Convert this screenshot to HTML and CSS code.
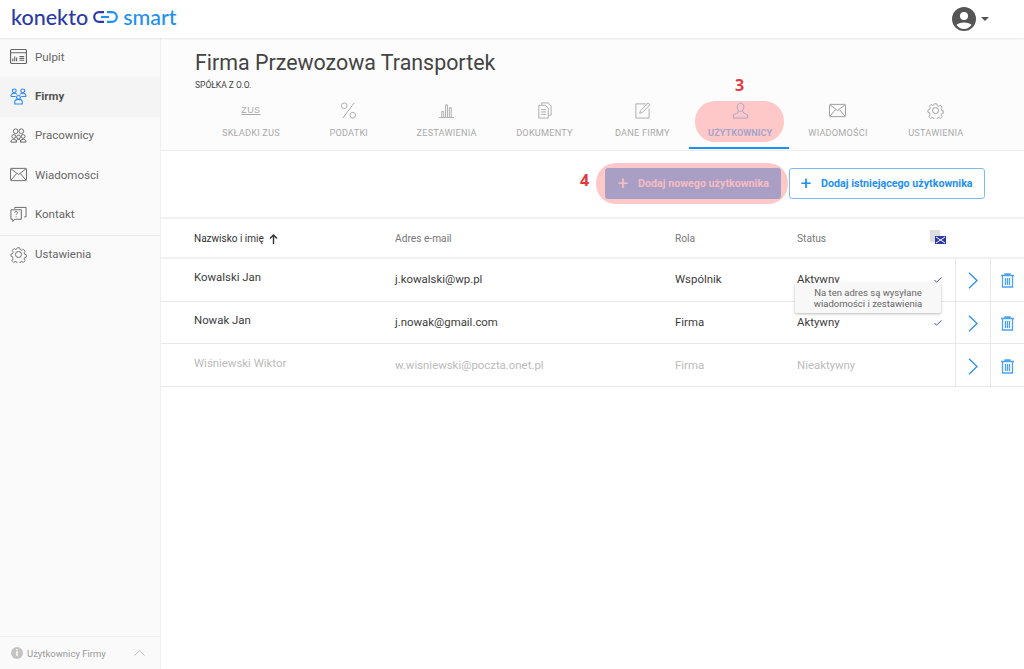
FILE: index.html
```html
<!DOCTYPE html>
<html lang="pl">
<head>
<meta charset="utf-8">
<title>Konekto Smart</title>
<link rel="stylesheet" href="styles.css">
</head>
<body>
<header class="topbar">
  <div class="logo"><span class="logo-dark">konekto</span>
    <svg class="logo-mark" width="25" height="12" viewBox="0 0 25 12" fill="none" stroke-width="2.2"><path d="M11 1.200H6a4.800 4.800 0 0 0 0 9.600h5" stroke="#2b3aa8"/><path d="M8 6h8" stroke="#1e90f0"/><path d="M14 1.200h5a4.800 4.800 0 0 1 0 9.600h-5" stroke="#1e90f0"/></svg>
    <span class="logo-blue">smart</span></div>
  <div class="account">
    <svg width="24" height="24" viewBox="0 0 24 24"><circle cx="12" cy="12" r="12" fill="#555"/><circle cx="12" cy="9" r="4" fill="#fff"/><path d="M4.500 18c2-3.400 13-3.400 15 0-2 2.800-4.500 4-7.500 4s-5.500-1.200-7.500-4z" fill="#fff"/></svg>
    <span class="caret"></span>
  </div>
</header>
<div class="shell">
  <aside class="sidebar">
    <nav class="menu">
      <a class="menu-item"><svg class="mi" viewBox="0 0 18 16" fill="none" stroke="#666" stroke-width="1.200"><rect x=".6" y=".6" width="16.800" height="14.800" rx="1"/><path d="M.5 4h17M3 13V10M5 13V8M7 13V9M10 8h5M10 10h5M10 12h5"/></svg>Pulpit</a>
      <a class="menu-item active"><svg class="mi" viewBox="0 0 18 18" fill="none" stroke="#2b8df0" stroke-width="1.200"><circle cx="4.500" cy="3" r="2"/><circle cx="13.500" cy="3" r="2"/><circle cx="9" cy="10" r="2"/><path d="M1 9c0-2 1-3.500 3.500-3.500 1.500 0 2.500.5 3 1.500M17 9c0-2-1-3.500-3.500-3.500-1.500 0-2.500.5-3 1.500M1 9h5M12 9h5M5 17v-2c0-2 2-3 4-3s4 1 4 3v2z"/></svg>Firmy</a>
      <a class="menu-item"><svg class="mi" viewBox="0 0 18 16" fill="none" stroke="#666"><circle cx="6" cy="3.500" r="2.500"/><circle cx="12" cy="3.500" r="2.500"/><circle cx="4" cy="9" r="2"/><circle cx="9" cy="9.500" r="2"/><circle cx="14" cy="9" r="2"/><path d="M1 15c0-2 1-3 3-3s3 1 3 3zM6.500 15c0-2 1-3 2.500-3s2.500 1 2.500 3M11 15c0-2 1-3 3-3s3 1 3 3z"/></svg>Pracownicy</a>
      <a class="menu-item"><svg class="mi" viewBox="0 0 18 14" fill="none" stroke="#666"><rect x=".5" y=".5" width="17" height="13" rx="1"/><path d="M1 1l8 6 8-6M1 13l6-7M17 13l-6-7"/></svg>Wiadomości</a>
      <a class="menu-item"><svg class="mi" viewBox="0 0 18 18" fill="none" stroke="#666"><path d="M5 3V1.500h12v10h-2M1 4h11v10H5l-2 2.500V14H1z"/><path d="M5 7c0-1.500 3-1.500 3 0 0 1-1.500 1-1.500 2.500M6.500 11v.8"/></svg>Kontakt</a>
      <a class="menu-item separated"><svg class="mi" viewBox="0 0 18 18" fill="none" stroke="#666"><circle cx="9" cy="9" r="3.200"/><path d="M7.500 1h3l.5 2.200 1.800.8 2-1.200 2 2.200-1.200 2 .7 1.800 2 .5v2.800l-2 .5-.7 1.800 1.200 2-2 2-2-1.200-1.800.8-.5 2h-3l-.5-2-1.800-.8-2 1.200-2-2 1.200-2L2 11.500 0 11V8.500l2-.7.800-1.800-1.200-2 2-2.200 2 1.200 1.400-.8z" transform="translate(1 1) scale(.89)"/></svg>Ustawienia</a>
    </nav>
    <div class="side-foot"><span class="info">i</span><span class="foot-label">Użytkownicy Firmy</span>
      <svg class="chev" width="11" height="6" viewBox="0 0 11 6" fill="none" stroke="#bbb"><path d="M.5 5.500l5-5 5 5"/></svg></div>
  </aside>
  <main class="content">
    <section class="company">
      <h1 class="title">Firma Przewozowa Transportek</h1>
      <div class="subtitle">SPÓŁKA Z O.O.</div>
      <div class="tabs">
        <a class="tab"><span class="tab-icon zus">ZUS</span><span>SKŁADKI ZUS</span></a>
        <a class="tab"><svg class="ti" viewBox="0 0 18 18" fill="none" stroke="#aaa"><circle cx="4.500" cy="4" r="3"/><circle cx="13.500" cy="14" r="3"/><path d="M15 1L3 17"/></svg><span>PODATKI</span></a>
        <a class="tab"><svg class="ti" viewBox="0 0 18 18" fill="none" stroke="#aaa"><path d="M1 16.500h16M4 16v-6h2v6M8 16V3h2v13M12 16V6h2v10"/></svg><span>ZESTAWIENIA</span></a>
        <a class="tab"><svg class="ti" viewBox="0 0 18 18" fill="none" stroke="#aaa"><path d="M6 3V1h7l3 3v10h-3"/><path d="M3 3.500h7l3 3V17H3zM5.500 8h5M5.500 10.500h5M5.500 13h5"/></svg><span>DOKUMENTY</span></a>
        <a class="tab"><svg class="ti" viewBox="0 0 18 18" fill="none" stroke="#aaa"><path d="M13 2H2v15h14V7"/><path d="M7 9l8-8 2 2-8 8-3 1z"/></svg><span>DANE FIRMY</span></a>
        <a class="tab current"><svg class="ti" viewBox="0 0 18 18" fill="none" stroke="#a9a3c9"><path d="M5.500 5c0-5 7-5 7 0 0 3-1.500 5-3.500 5s-3.500-2-3.500-5zM6.500 9.500L6 11.500l-4.500 2V17h15v-3.500l-4.500-2-.5-2"/></svg><span>UŻYTKOWNICY</span></a>
        <a class="tab"><svg class="ti" viewBox="0 0 18 14" fill="none" stroke="#999"><rect x=".5" y=".5" width="17" height="13" rx="1"/><path d="M1 1l8 6 8-6M1 13l6-7M17 13l-6-7"/></svg><span>WIADOMOŚCI</span></a>
        <a class="tab"><svg class="ti" viewBox="0 0 18 18" fill="none" stroke="#999"><circle cx="9" cy="9" r="3.200"/><path d="M7.500 1h3l.5 2.200 1.800.8 2-1.200 2 2.200-1.200 2 .7 1.800 2 .5v2.800l-2 .5-.7 1.800 1.200 2-2 2-2-1.200-1.800.8-.5 2h-3l-.5-2-1.800-.8-2 1.200-2-2 1.200-2L2 11.500 0 11V8.500l2-.7.800-1.800-1.200-2 2-2.200 2 1.200 1.400-.8z" transform="translate(1 1) scale(.89)"/></svg><span>USTAWIENIA</span></a>
      </div>
    </section>
    <section class="actions">
      <button class="btn primary"><span class="plus">+</span>Dodaj nowego użytkownika</button>
      <button class="btn outline"><span class="plus">+</span>Dodaj istniejącego użytkownika</button>
    </section>
    <section class="table">
      <div class="row head">
        <div>Nazwisko i imię <svg class="arrow" width="9" height="10" viewBox="0 0 9 10" fill="none" stroke="#333" stroke-width="1.400"><path d="M4.500 10V1M1 4.500l3.500-3.500L8 4.500"/></svg></div><div>Adres e-mail</div><div>Rola</div><div>Status</div>
        <div class="mail-col"><svg width="16" height="14" viewBox="0 0 16 14"><rect x="0" y="0" width="10" height="12" fill="#ddd"/><rect x="5" y="6" width="11" height="8" fill="#2b3aa8"/><path d="M6 7l9 6M15 7l-9 6" stroke="#fff"/></svg></div>
        <div></div><div></div>
      </div>
      <div class="row">
        <div class="name">Kowalski Jan</div><div>j.kowalski@wp.pl</div><div>Wspólnik</div><div>Aktywny</div>
        <div class="check"><svg width="8" height="6" viewBox="0 0 8 6" fill="none" stroke="#4a55b0"><path d="M.5 3l2 2.200L7.500.5"/></svg></div>
        <div class="cell-icon"><svg class="go" viewBox="0 0 10 17" fill="none" stroke="#2b8df0" stroke-width="1.300"><path d="M1 .7l8 7.800-8 7.800"/></svg></div>
        <div class="cell-icon"><svg class="trash" viewBox="0 0 13 15" fill="none" stroke="#4ba3f2" stroke-width="1.300"><path d="M0 2.500h13M4 2.500V1h5v1.500M1.500 2.500V14h10V2.500M4.500 5v7M6.500 5v7M8.500 5v7"/></svg></div>
      </div>
      <div class="row">
        <div class="name">Nowak Jan</div><div>j.nowak@gmail.com</div><div>Firma</div><div>Aktywny</div>
        <div class="check"><svg width="8" height="6" viewBox="0 0 8 6" fill="none" stroke="#4a55b0"><path d="M.5 3l2 2.200L7.500.5"/></svg></div>
        <div class="cell-icon"><svg class="go" viewBox="0 0 10 17" fill="none" stroke="#2b8df0" stroke-width="1.300"><path d="M1 .7l8 7.800-8 7.800"/></svg></div>
        <div class="cell-icon"><svg class="trash" viewBox="0 0 13 15" fill="none" stroke="#4ba3f2" stroke-width="1.300"><path d="M0 2.500h13M4 2.500V1h5v1.500M1.500 2.500V14h10V2.500M4.500 5v7M6.500 5v7M8.500 5v7"/></svg></div>
      </div>
      <div class="row inactive">
        <div class="name">Wiśniewski Wiktor</div><div>w.wisniewski@poczta.onet.pl</div><div>Firma</div><div>Nieaktywny</div>
        <div></div>
        <div class="cell-icon"><svg class="go" viewBox="0 0 10 17" fill="none" stroke="#2b8df0" stroke-width="1.300"><path d="M1 .7l8 7.800-8 7.800"/></svg></div>
        <div class="cell-icon"><svg class="trash" viewBox="0 0 13 15" fill="none" stroke="#4ba3f2" stroke-width="1.300"><path d="M0 2.500h13M4 2.500V1h5v1.500M1.500 2.500V14h10V2.500M4.500 5v7M6.500 5v7M8.500 5v7"/></svg></div>
      </div>
    </section>
    <div class="tooltip">Na ten adres są wysyłane<br>wiadomości i zestawienia</div>
    <div class="note-pill pill-tab"></div>
    <div class="note-pill pill-btn"></div>
    <div class="note-num num-3">3</div>
    <div class="note-num num-4">4</div>
  </main>
</div>
</body>
</html>
```
FILE: styles.css
```css
* { box-sizing: border-box; }
html, body { margin: 0; height: 100%; }
body { font-family: Roboto, "Liberation Sans", sans-serif; background: #fff; color: #444; overflow: hidden; }
.topbar { height: 38px; display: flex; align-items: center; justify-content: space-between; padding: 0 35px 0 11px; background: #fff; box-shadow: 0 1px 2px rgba(0,0,0,.09); position: relative; z-index: 2; }
.logo { display: flex; align-items: center; gap: 5px; font-family: Lato, sans-serif; font-size: 21.500px; font-weight: 500; margin-top: -4px; }
.logo-dark { color: #2b3aa8; }
.logo-blue { color: #1e90f0; }
.account { display: flex; align-items: center; gap: 5px; }
.caret { width: 0; height: 0; border: 4.500px solid transparent; border-top-color: #555; border-bottom: 0; }
.shell { display: flex; height: 631px; }
.sidebar { width: 161px; background: #fafafa; border-right: 1px solid #f0f0f0; display: flex; flex-direction: column; justify-content: space-between; }
.menu { display: flex; flex-direction: column; }
.menu-item { height: 39.400px; display: flex; align-items: center; gap: 8px; padding: 0 0 2px 10px; font-size: 11.500px; color: #666; }
.menu-item.active { background: #f4f4f4; font-weight: 700; color: #555; }
.menu-item.separated { border-top: 1px solid #ececec; height: 40px; }
.mi { width: 17px; height: 17px; flex: none; }
.side-foot { height: 33px; border-top: 1px solid #efefef; display: flex; align-items: center; padding: 0 15px 0 11px; font-size: 9.500px; color: #999; }
.info { width: 12px; height: 12px; border-radius: 50%; background: #c4c4c4; color: #fff; font-size: 9px; font-weight: 700; text-align: center; line-height: 12px; margin-right: 4px; }
.foot-label { flex: 1; }
.content { flex: 1; position: relative; min-width: 0; }
.company { height: 113px; background: #fcfcfc; border-bottom: 1px solid #eee; padding-top: 11px; }
.title { margin: 0 0 0 34px; font-size: 21.400px; font-weight: 400; line-height: 27px; color: #444; }
.subtitle { margin: 4px 0 0 34px; font-size: 8.500px; line-height: 10px; color: #444; }
.tabs { display: flex; margin: 9px 0 0 41px; }
.tab { width: 97.850px; height: 47px; padding-top: 3px; display: flex; flex-direction: column; align-items: center; font-size: 9.200px; color: #aaa; letter-spacing: .2px; }
.tab > span:last-child { margin-top: 8px; line-height: 11px; }
.ti { width: 17px; height: 17px; }
.zus { font-family: "Liberation Sans", sans-serif; font-size: 9px; line-height: 17px; height: 17px; color: #aaa; text-decoration: underline; letter-spacing: .4px; }
.tab.current { position: relative; z-index: 1; color: #a8a5cc; font-weight: 700; letter-spacing: 0; }
.tab.current::after { content: ""; position: absolute; left: -2px; right: 0; bottom: -3px; height: 2px; background: #1e90f0; }
.actions { height: 68px; border-bottom: 2px solid #f0f0f0; display: flex; justify-content: flex-end; align-items: flex-start; gap: 8px; padding: 17px 39px 0 0; }
.btn { height: 31px; border-radius: 3px; font: 700 10.700px Roboto, sans-serif; display: flex; align-items: center; padding: 0 12px; white-space: nowrap; }
.plus { font-size: 19px; font-weight: 400; width: 12px; text-align: center; margin-right: 9px; line-height: 1; }
.primary { background: #a99fc4; border: 0; color: #f5bcc4; width: 176px; position: relative; z-index: 1; }
.outline { background: #fff; border: 1px solid #7cbcf5; color: #1e90f0; width: 196px; padding: 0 10px; }
.row { display: grid; grid-template-columns: 201px 280px 122px 136px 22px 35px 34px; height: 42.700px; padding-left: 33px; border-bottom: 1px solid #e8e8e8; align-items: center; font-size: 11.400px; color: #3c3c3c; }
.row > div { height: 100%; display: flex; align-items: center; padding-bottom: 1px; }
.row.head { height: 40px; border-bottom-width: 2px; border-bottom-color: #f0f0f0; font-size: 10.200px; color: #777; }
.row.head > div { padding-bottom: 0; padding-top: 1px; }
.row.head > div:first-child { color: #333; font-size: 10px; }
.arrow { margin-left: 5px; }
.row.head > .mail-col { padding: 0 0 2px; margin-left: -3px; }
.row > .name { padding-bottom: 5px; }
.row > .check { padding-left: 1px; padding-top: 1px; }
.row > .cell-icon { border-left: 1px solid #e8e8e8; justify-content: center; padding: 2px 0 0; }
.go { width: 10px; height: 17px; }
.trash { width: 13px; height: 15px; }
.inactive > div { color: #bbb; }
.tooltip { position: absolute; left: 634px; top: 245px; width: 146px; height: 30px; background: #f8f8f8; border-radius: 2px; box-shadow: 0 1px 3px rgba(0,0,0,.28); font-size: 9.500px; line-height: 11px; text-align: center; padding-top: 4px; color: #666; }
.note-pill { position: absolute; background: #ffc8c8; }
.pill-tab { left: 534px; top: 63px; width: 89px; height: 41px; border-radius: 20px; }
.pill-btn { left: 435px; top: 125px; width: 192px; height: 41px; border-radius: 20px; }
.note-num { position: absolute; color: #e8383d; font: 700 16px "Open Sans", sans-serif; line-height: 20px; }
.num-3 { left: 574px; top: 37px; }
.num-4 { left: 419px; top: 132px; }
```
